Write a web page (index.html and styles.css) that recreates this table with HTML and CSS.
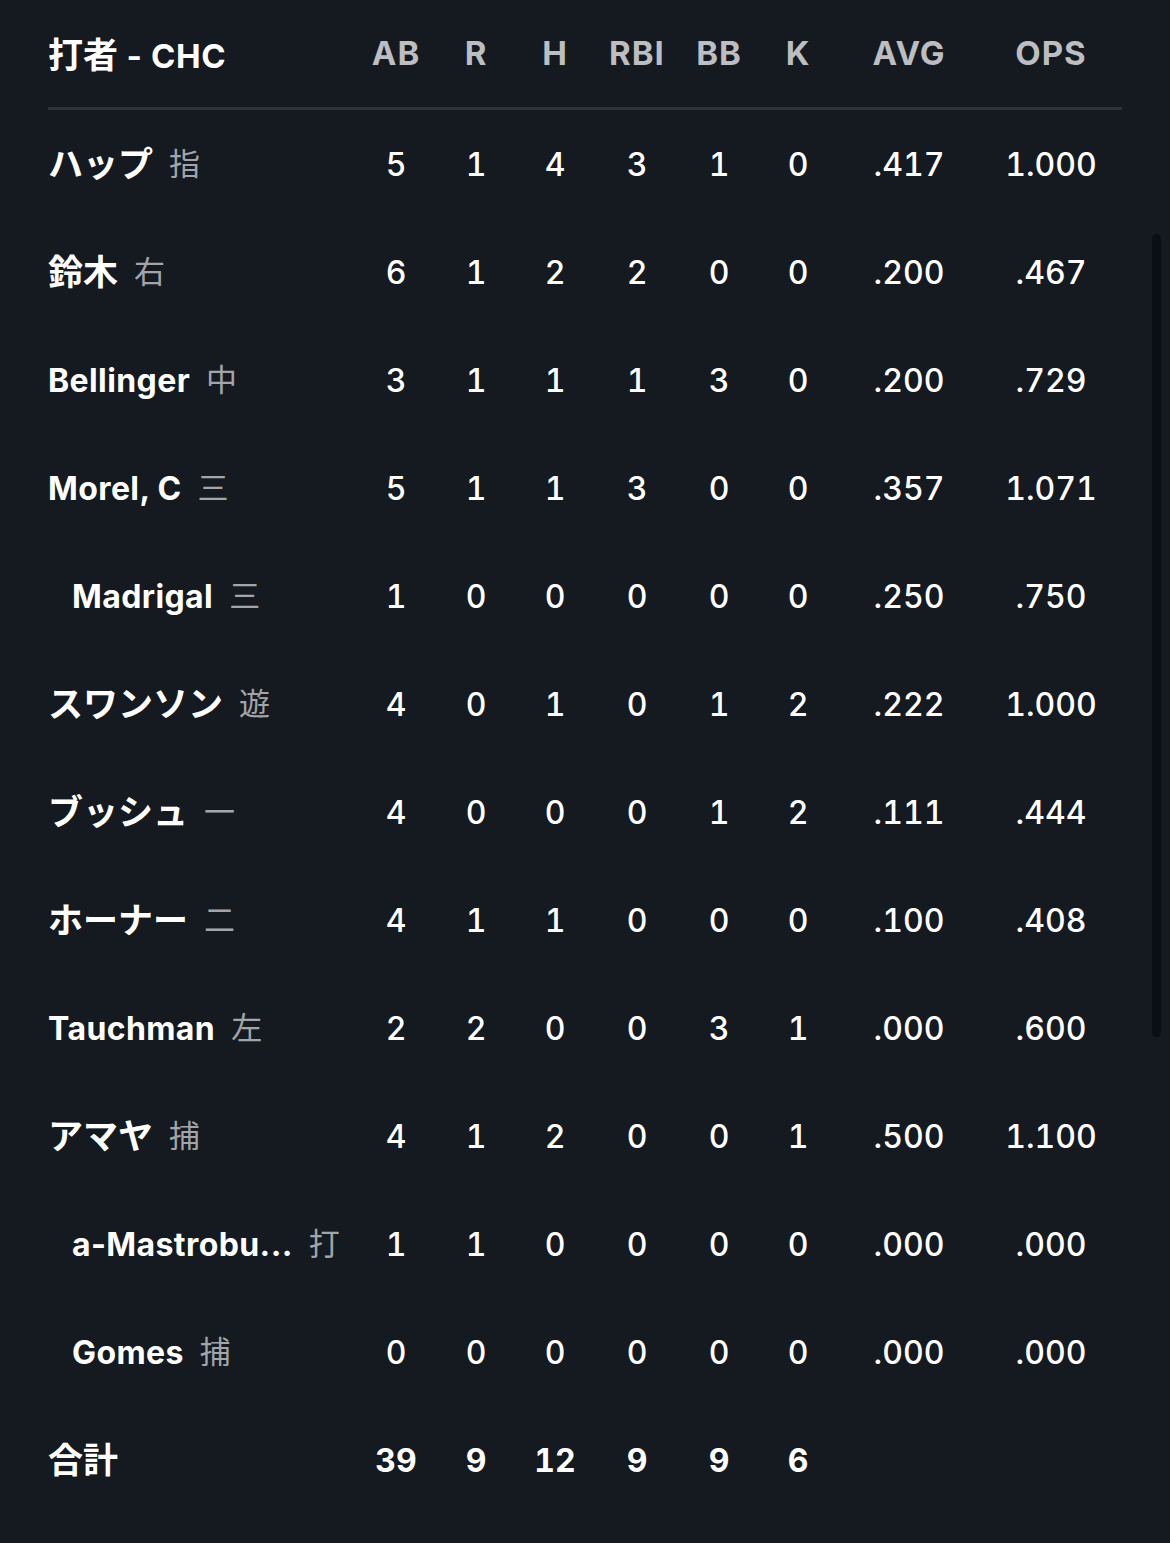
FILE: index.html
```html
<!DOCTYPE html>
<html lang="ja">
<head>
<meta charset="utf-8">
<link rel="stylesheet" href="styles.css">
</head>
<body>
<div class="page">
  <div class="box">
    <div class="row head">
      <div class="name-cell"><span class="title"><span class="ja">打者</span> - CHC</span></div>
      <div class="c">AB</div><div class="c">R</div><div class="c">H</div><div class="c">RBI</div><div class="c">BB</div><div class="c">K</div><div class="c">AVG</div><div class="c">OPS</div>
    </div>
    <div class="divider"></div>
    <div class="row"><div class="name-cell"><span class="nm ja">ハップ</span><span class="pos">指</span></div><div class="c">5</div><div class="c">1</div><div class="c">4</div><div class="c">3</div><div class="c">1</div><div class="c">0</div><div class="c">.417</div><div class="c">1.000</div></div>
    <div class="row"><div class="name-cell"><span class="nm ja">鈴木</span><span class="pos">右</span></div><div class="c">6</div><div class="c">1</div><div class="c">2</div><div class="c">2</div><div class="c">0</div><div class="c">0</div><div class="c">.200</div><div class="c">.467</div></div>
    <div class="row"><div class="name-cell"><span class="nm">Bellinger</span><span class="pos">中</span></div><div class="c">3</div><div class="c">1</div><div class="c">1</div><div class="c">1</div><div class="c">3</div><div class="c">0</div><div class="c">.200</div><div class="c">.729</div></div>
    <div class="row"><div class="name-cell"><span class="nm">Morel, C</span><span class="pos">三</span></div><div class="c">5</div><div class="c">1</div><div class="c">1</div><div class="c">3</div><div class="c">0</div><div class="c">0</div><div class="c">.357</div><div class="c">1.071</div></div>
    <div class="row"><div class="name-cell sub"><span class="nm">Madrigal</span><span class="pos">三</span></div><div class="c">1</div><div class="c">0</div><div class="c">0</div><div class="c">0</div><div class="c">0</div><div class="c">0</div><div class="c">.250</div><div class="c">.750</div></div>
    <div class="row"><div class="name-cell"><span class="nm ja">スワンソン</span><span class="pos">遊</span></div><div class="c">4</div><div class="c">0</div><div class="c">1</div><div class="c">0</div><div class="c">1</div><div class="c">2</div><div class="c">.222</div><div class="c">1.000</div></div>
    <div class="row"><div class="name-cell"><span class="nm ja">ブッシュ</span><span class="pos">一</span></div><div class="c">4</div><div class="c">0</div><div class="c">0</div><div class="c">0</div><div class="c">1</div><div class="c">2</div><div class="c">.111</div><div class="c">.444</div></div>
    <div class="row"><div class="name-cell"><span class="nm ja">ホーナー</span><span class="pos">二</span></div><div class="c">4</div><div class="c">1</div><div class="c">1</div><div class="c">0</div><div class="c">0</div><div class="c">0</div><div class="c">.100</div><div class="c">.408</div></div>
    <div class="row"><div class="name-cell"><span class="nm">Tauchman</span><span class="pos">左</span></div><div class="c">2</div><div class="c">2</div><div class="c">0</div><div class="c">0</div><div class="c">3</div><div class="c">1</div><div class="c">.000</div><div class="c">.600</div></div>
    <div class="row"><div class="name-cell"><span class="nm ja">アマヤ</span><span class="pos">捕</span></div><div class="c">4</div><div class="c">1</div><div class="c">2</div><div class="c">0</div><div class="c">0</div><div class="c">1</div><div class="c">.500</div><div class="c">1.100</div></div>
    <div class="row"><div class="name-cell sub"><span class="nm">a-Mastrobu...</span><span class="pos">打</span></div><div class="c">1</div><div class="c">1</div><div class="c">0</div><div class="c">0</div><div class="c">0</div><div class="c">0</div><div class="c">.000</div><div class="c">.000</div></div>
    <div class="row"><div class="name-cell sub"><span class="nm">Gomes</span><span class="pos">捕</span></div><div class="c">0</div><div class="c">0</div><div class="c">0</div><div class="c">0</div><div class="c">0</div><div class="c">0</div><div class="c">.000</div><div class="c">.000</div></div>
    <div class="row total"><div class="name-cell"><span class="nm ja">合計</span></div><div class="c">39</div><div class="c">9</div><div class="c">12</div><div class="c">9</div><div class="c">9</div><div class="c">6</div><div class="c"></div><div class="c"></div></div>
  </div>
  <div class="scrollbar"></div>
</div>
</body>
</html>
```

FILE: styles.css
```css
html, body {
  margin: 0;
  padding: 0;
  background: #151a21;
}
body {
  font-family: Inter, "Noto Sans CJK JP", sans-serif;
  color: #ffffff;
}
.page {
  position: relative;
  width: 1170px;
  height: 1543px;
  overflow: hidden;
}
.box {
  padding: 0 48px;
}
.row {
  display: grid;
  grid-template-columns: 308px 80px 80px 78px 86px 78px 80px 142px 142px;
  align-items: center;
  height: 108px;
  font-size: 32px;
  font-weight: 500;
}
.row.head {
  height: 105px;
  padding-bottom: 2px;
}
.head .c {
  color: #bcbec1;
  font-weight: 700;
  font-size: 33px;
  letter-spacing: 1px;
}
.title {
  font-weight: 700;
  color: #ffffff;
  font-size: 33px;
  letter-spacing: 0.6px;
}
.c {
  text-align: center;
  white-space: nowrap;
  font-variant-numeric: tabular-nums;
}
.divider {
  height: 3px;
  background: #2a323b;
}
.name-cell {
  display: flex;
  align-items: center;
  white-space: nowrap;
}
.name-cell.sub {
  padding-left: 24px;
}
.nm {
  font-weight: 700;
  letter-spacing: 0.4px;
}
.ja {
  font-size: 35px;
  letter-spacing: 0;
  padding-bottom: 5px;
}
.pos {
  margin-left: 16px;
  color: #a2a5a9;
  font-weight: 400;
  font-size: 31px;
  padding-bottom: 5px;
}
.total .c {
  font-weight: 700;
}
.scrollbar {
  position: absolute;
  left: 1152px;
  top: 234px;
  width: 9px;
  height: 803px;
  border-radius: 5px;
  background: #0b0f13;
}
```
